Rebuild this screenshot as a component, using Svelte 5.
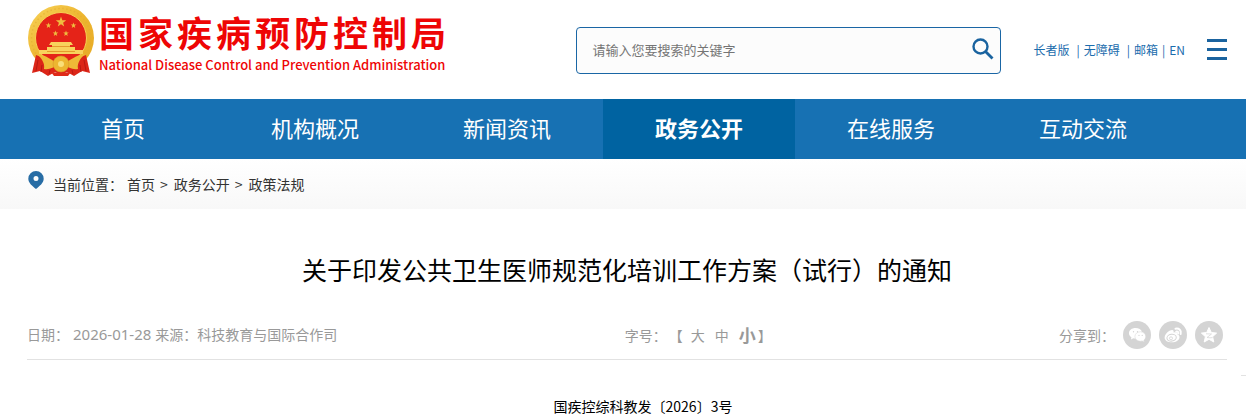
<script>
  const nav = ['首页', '机构概况', '新闻资讯', '政务公开', '在线服务', '互动交流'];
  const active = '政务公开';
  let size = $state('小');
  let keyword = $state('');
  const star = (cx, cy, r) =>
    Array.from({ length: 10 }, (_, i) => {
      const a = (Math.PI * i) / 5 - Math.PI / 2;
      const d = i % 2 ? r * 0.4 : r;
      return `${(cx + d * Math.cos(a)).toFixed(2)},${(cy + d * Math.sin(a)).toFixed(2)}`;
    }).join(' ');
</script>

<header class="top">
  <a class="brand" href="#home">
    <svg class="emblem" viewBox="0 0 68 72" aria-hidden="true">
      <defs>
        <linearGradient id="gold" x1="0" y1="0" x2="1" y2="1">
          <stop offset="0" stop-color="#f8d35a" />
          <stop offset=".5" stop-color="#edb52f" />
          <stop offset="1" stop-color="#e6a925" />
        </linearGradient>
      </defs>
      <circle cx="34" cy="33" r="33" fill="url(#gold)" />
      <circle cx="34" cy="33" r="29.5" fill="none" stroke="#e3ab30" stroke-width="1.5" stroke-dasharray="1.5 2.5" opacity=".6" />
      <circle cx="34" cy="33" r="25.5" fill="#e52318" stroke="#f7cf52" stroke-width="1" />
      <g fill="#efbd3f">
        <polygon points={star(34, 17, 5.5)} />
        <polygon points={star(21.5, 20.5, 3)} />
        <polygon points={star(46.5, 20.5, 3)} />
        <polygon points={star(28.5, 28.5, 3)} />
        <polygon points={star(39, 28.5, 3)} />
      </g>
      <path fill="#f8d25c" d="M24 37h20l2 3h-3v2h5v3h8v4H12v-4h8v-3h5v-2h-3z" />
      <path fill="#e59a2c" d="M25 41h18v1H25zM20 46h28v1H20z" />
      <path fill="#dc2618" d="M9 50l13 5 12-3 12 3 13-5 4 18-8-2-8 5-7-4-6 3-6-3-7 4-8-5-8 2z" />
      <path fill="#efba37" d="M10 49c10 1 15 7 21 9-4 5-9 7-14 6 1-6-2-10-7-15zM58 49c-10 1-15 7-21 9 4 5 9 7 14 6-1-6 2-10 7-15z" />
      <path fill="none" stroke="#b91911" d="M11 55l-2 11M15 60l-1 7M57 55l2 11M53 60l1 7M23 65l-1 4M45 65l1 4" />
      <circle cx="34" cy="59" r="8" fill="#edb630" stroke="#d9982a" stroke-width=".6" />
      <circle cx="34" cy="59" r="3" fill="#f9df79" />
      <path fill="#df2a19" d="M24 67l10 1 10-1-3 4H27z" />
    </svg>
    <span class="names">
      <strong>国家疾病预防控制局</strong>
      <span class="en">National Disease Control and Prevention Administration</span>
    </span>
  </a>

  <form class="search" role="search" onsubmit={(e) => e.preventDefault()}>
    <input type="text" bind:value={keyword} aria-label="请输入您要搜索的关键字" placeholder="请输入您要搜索的关键字" />
    <button aria-label="搜索">
      <svg viewBox="0 0 22 22" width="22" height="22" fill="none" stroke="#1a639f">
        <circle cx="8.500" cy="8.500" r="7" stroke-width="2.400" />
        <path d="M13.500 13.500l7 7" stroke-width="2.800" />
      </svg>
    </button>
  </form>

  <div class="tools">
    <a href="#elder">长者版</a><span class="bar wide">|</span>
    <a href="#access">无障碍</a><span class="bar wide">|</span>
    <a href="#mail">邮箱</a><span class="bar">|</span>
    <a href="#en">EN</a>
  </div>
  <button class="menu" aria-label="菜单"><i></i><i></i><i></i></button>
</header>

<nav class="main-nav">
  {#each nav as item}
    <a href="#nav" class:active={item === active}>{item}</a>
  {/each}
</nav>

<div class="crumbs">
  <svg viewBox="0 0 16 18" width="16" height="18" aria-hidden="true">
    <path fill="#286da5" fill-rule="evenodd" d="M8 0a7.700 7.700 0 0 0-7.700 7.700C.3 12 4.500 15 8 18c3.500-3 7.700-6 7.700-10.300A7.700 7.700 0 0 0 8 0zm0 5a2.500 2.500 0 1 1 0 5 2.500 2.500 0 0 1 0-5z" />
  </svg>
  <div class="trail">
    <span class="label">当前位置：</span>
    <a href="#home">首页</a><span>&gt;</span><a href="#open">政务公开</a><span>&gt;</span><a href="#law">政策法规</a>
  </div>
</div>

<main>
  <h1>关于印发公共卫生医师规范化培训工作方案（试行）的通知</h1>
  <div class="meta">
    <div class="source"><span>日期：</span><time>2026-01-28</time><span>来源：科技教育与国际合作司</span></div>
    <div class="sizes">
      <span>字号：</span><span>【</span>
      {#each ['大', '中', '小'] as s}
        <button class:on={size === s} onclick={() => (size = s)}>{s}</button>
      {/each}
      <span>】</span>
    </div>
    <div class="share">
      <span>分享到：</span>
      <a href="#wechat" aria-label="微信">
        <svg viewBox="0 0 28 28">
          <path fill="#fff" d="M12.500 7C8.700 7 6 9.200 6 12.200c0 1.700.9 3.100 2.400 4.100L8 18.500l2.400-1.300c1 .3 1.500.3 2.600.3-1-4 2-7 6-6.800C18.300 8.500 15.800 7 12.500 7z" />
          <path fill="#fff" stroke="#d4d4d4" stroke-width=".5" d="M17.300 10.800c-3 0-5.400 2-5.400 4.700s2.400 4.700 5.400 4.700c.7 0 1.300-.1 1.900-.3l2.100 1.100-.5-1.900c1.200-.8 1.900-2.100 1.900-3.600 0-2.700-2.400-4.700-5.400-4.700z" />
          <g fill="#d4d4d4"><circle cx="10.500" cy="10.700" r=".7" /><circle cx="14.500" cy="10.700" r=".7" /><circle cx="16" cy="14.400" r=".6" /><circle cx="19.200" cy="14.400" r=".6" /></g>
        </svg>
      </a>
      <a href="#weibo" aria-label="微博">
        <svg viewBox="0 0 28 28">
          <path fill="#fff" d="M18.200 13.300c.5-1 .4-3-3.700-1.700.8-3-1.200-3.400-4-1.800-2.500 1.500-4.900 4-4.900 6.600 0 3.200 3.500 4.900 7.200 4.900 4.500 0 7.700-2.500 7.700-5.100 0-1.600-1.100-2.500-2.300-2.900z" />
          <ellipse cx="12.600" cy="16.700" rx="4.700" ry="3.400" fill="none" stroke="#d4d4d4" transform="rotate(-8 12.600 16.700)" />
          <circle cx="12" cy="17.300" r="1.500" fill="none" stroke="#d4d4d4" stroke-width=".8" />
          <path fill="none" stroke="#fff" stroke-width="2" stroke-linecap="round" d="M16.500 7.800c3.400-.9 6.300 1.800 5.200 5.200M17.200 10.600c1.600-.4 2.400.6 2 2" />
        </svg>
      </a>
      <a href="#qzone" aria-label="QQ空间">
        <svg viewBox="0 0 28 28">
          <path fill="#fff" stroke="#fff" stroke-linejoin="round" d="M14 6.500l2.300 5 5.300.6-4 3.600 1.200 5.300-4.800-2.700L9.200 21l1.200-5.300-4-3.600 5.300-.6z" />
          <path fill="none" stroke="#d8d8d8" stroke-width=".8" d="M11 12.800l5.500.2-4.500 3.500c2 .5 4 .4 5.500.1" />
        </svg>
      </a>
    </div>
  </div>
  <p class="number">国疾控综科教发〔2026〕3号</p>
  <i class="edge"></i>
</main>

<style>
  :global(body) {
    margin: 0;
    background: #fff;
    color: #333;
    font: 14px/20px 'Noto Sans CJK SC', sans-serif;
  }
  a { color: inherit; text-decoration: none; }
  button { border: 0; padding: 0; background: none; font: inherit; color: inherit; cursor: pointer; }
  svg { display: block; }

  .top {
    display: flex;
    align-items: center;
    box-sizing: border-box;
    min-height: 99px;
    padding: 0 19px 0 27px;
  }
  .brand { display: flex; gap: 4px; margin-bottom: 18px; color: #ee0505; }
  .emblem { width: 68px; height: 72px; flex: none; }
  .names { display: flex; flex-direction: column; padding-top: 4px; white-space: nowrap; }
  .names strong { font-size: 35px; line-height: 46px; font-weight: 700; letter-spacing: 4px; }
  .en { font-size: 13px; line-height: 20px; font-weight: 500; }

  .search {
    display: flex;
    align-items: center;
    flex: 0 1 425px;
    box-sizing: border-box;
    height: 47px;
    margin: 2px 32px 0 auto;
    padding: 0 6px 2px 15px;
    border: 1px solid #1a66a5;
    border-radius: 4px;
    background: #fcfcfc;
  }
  .search input {
    flex: 1;
    min-width: 0;
    border: 0;
    outline: 0;
    padding: 0;
    background: none;
    font: 13px/20px 'Noto Sans CJK SC', sans-serif;
  }
  .search input::placeholder { color: #757575; opacity: 1; }
  .search button { margin-bottom: 2px; }

  .tools {
    display: flex;
    align-items: center;
    color: #1a6cad;
    font-size: 12px;
    line-height: 20px;
    white-space: nowrap;
  }
  .bar { margin: 0 4px; }
  .bar.wide { margin-left: 7px; }
  .menu { display: grid; gap: 6px; width: 20px; margin-left: 22px; }
  .menu i { height: 3px; background: #1a639f; }

  .main-nav {
    display: grid;
    grid-template-columns: repeat(6, 16%);
    padding: 0 19px 0 27px;
    background: #1771b3;
    color: #fff;
    font-size: 22px;
    line-height: 56px;
    text-align: center;
  }
  .main-nav a { padding-bottom: 4px; }
  .active { background: #0063a1; font-weight: 700; }

  .crumbs {
    display: flex;
    align-items: center;
    gap: 9px;
    min-height: 50px;
    padding: 0 28px;
    background: linear-gradient(#fff, #f8f8f8);
  }
  .crumbs svg { margin-bottom: 8px; }
  .trail { display: flex; gap: 5px; }
  .trail span + a { margin-left: 1px; }
  .label { margin-right: -2px; }

  main { position: relative; padding: 42px 19px 0 27px; }
  h1 {
    margin: 0;
    color: #000;
    font-size: 25px;
    line-height: 36px;
    font-weight: 400;
    text-align: center;
  }
  .meta {
    display: flex;
    align-items: center;
    justify-content: space-between;
    height: 48px;
    margin-top: 24px;
    border-bottom: 1px solid #e2e2e2;
    color: #999;
  }
  .source, .sizes, .share { display: flex; align-items: center; }
  .source { gap: 4px; padding-bottom: 2px; }
  time { font: 15px/20px 'Noto Sans', sans-serif; }
  .sizes { gap: 10px; }
  .sizes span { margin-right: -2px; }
  .sizes span:first-child { margin-right: -8px; }
  .sizes .on { font-size: 17px; font-weight: 700; }
  .sizes .on + span { margin: 0 0 0 -8px; }
  .share { gap: 8px; padding-right: 4px; }
  .share a { width: 28px; height: 28px; border-radius: 50%; background: #d4d4d4; }
  .number { margin: 36px 0 0; color: #000; text-align: center; text-indent: 32px; }
  .edge { position: absolute; top: 166px; right: 0; width: 5px; height: 1px; background: #e2e2e2; }
</style>
